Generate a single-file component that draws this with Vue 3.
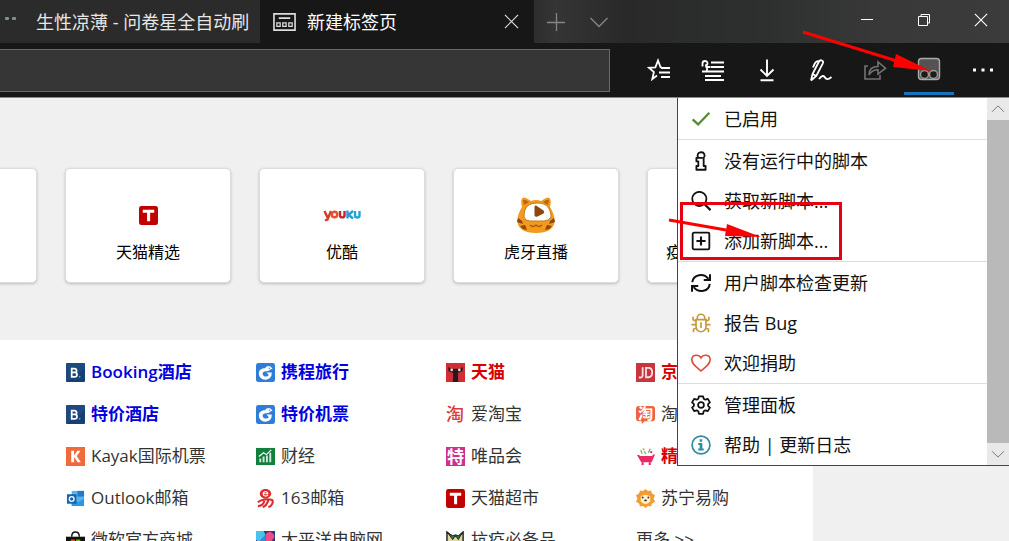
<script setup>
const tools = [
  { icon: 'favorites', label: '收藏夹' },
  { icon: 'reading', label: '阅读列表' },
  { icon: 'download', label: '下载' },
  { icon: 'pen', label: '添加笔记' },
  { icon: 'share', label: '共享' },
  { icon: 'monkey', label: '脚本管理器', active: true },
  { icon: 'dots', label: '更多' },
]
const cards = [
  { name: '', icon: '' },
  { name: '天猫精选', icon: 'tmall-t', kind: 'small' },
  { name: '优酷', icon: 'youku', kind: 'wide' },
  { name: '虎牙直播', icon: 'huya', kind: 'large' },
  { name: '疫情实时动态播报', icon: '' },
]
const links = [
  { name: 'Booking酒店', icon: 'booking', tone: 'blue' },
  { name: '携程旅行', icon: 'ctrip', tone: 'blue' },
  { name: '天猫', icon: 'tmall', tone: 'red' },
  { name: '京东', icon: 'jd', tone: 'red' },
  { name: '特价酒店', icon: 'booking', tone: 'blue' },
  { name: '特价机票', icon: 'ctrip', tone: 'blue' },
  { name: '爱淘宝', icon: 'aitaobao' },
  { name: '淘宝', icon: 'taobao' },
  { name: 'Kayak国际机票', icon: 'kayak' },
  { name: '财经', icon: 'finance' },
  { name: '唯品会', icon: 'vip' },
  { name: '精选', icon: 'cart', tone: 'red' },
  { name: 'Outlook邮箱', icon: 'outlook' },
  { name: '163邮箱', icon: 'netease' },
  { name: '天猫超市', icon: 'tmall-t' },
  { name: '苏宁易购', icon: 'suning' },
  { name: '微软官方商城', icon: 'store' },
  { name: '太平洋电脑网', icon: 'pconline' },
  { name: '抗疫必备品', icon: 'supplies' },
  { name: '更多 >>', icon: '' },
]
const groups = [
  [{ icon: 'check', label: '已启用', color: 'green' }],
  [
    { icon: 'info-i', label: '没有运行中的脚本' },
    { icon: 'search', label: '获取新脚本...' },
    { icon: 'add', label: '添加新脚本...' },
  ],
  [
    { icon: 'refresh', label: '用户脚本检查更新' },
    { icon: 'bug', label: '报告 Bug', color: 'gold' },
    { icon: 'heart', label: '欢迎捐助', color: 'coral' },
  ],
  [
    { icon: 'gear', label: '管理面板' },
    { icon: 'info', label: '帮助 | 更新日志', color: 'teal' },
  ],
]
</script>

<template>
  <div class="browser">
    <svg class="sprite" aria-hidden="true">
      <defs>
        <symbol id="favorites" viewBox="0 0 24 24">
          <path d="M15 9.500 L13.500 9.300 L11 2.500 L8.400 9.300 L2 9.800 L6.900 14 L5.300 21 L10 17.600 M14 10h9M12 14.500h11M14 19h9" fill="none" stroke="currentColor" stroke-width="1.8" />
        </symbol>
        <symbol id="reading" viewBox="0 0 24 24">
          <path d="M10 4.500h13M10 9h13M1 13.500h22M4 18h16M4 22h19M6 13.500V9M1.500 8.500V5.500a2.300 2.300 0 0 1 5 0c0 1.500-1 2-2.500 2M4.500 9h5" fill="none" stroke="currentColor" stroke-width="1.8" />
        </symbol>
        <symbol id="download" viewBox="0 0 24 24">
          <path d="M12 1.500V18M5.500 11.500 12 18l6.500-6.500M5.500 22.200h13" fill="none" stroke="currentColor" stroke-width="1.9" />
        </symbol>
        <symbol id="pen" viewBox="0 0 24 24">
          <path d="M2 22.500 3.500 16 10 3.500c1.500-2.500 5-.8 3.800 1.800L7.300 18 2 22.500M10 3.500C7 2 5.500 6 4 9.500M3.500 16l3.800 2M10 21c3-4 5-3.500 6-1.500s3 2.500 6.500-.5" fill="none" stroke="currentColor" stroke-width="1.8" />
        </symbol>
        <symbol id="share" viewBox="0 0 24 24">
          <path d="M5 8H2v13h15v-4M6 17c0-6 3-8.500 9-8.500V4l7.500 6.200-7.500 6v-4.500c-4 0-7 1.500-9 5.300Z" fill="none" stroke="currentColor" stroke-width="1.6" />
        </symbol>
        <symbol id="monkey" viewBox="0 0 24 24">
          <rect x="1.500" y="1.500" width="21" height="21" rx="3" fill="#535353" stroke="#aaa" stroke-width="1.4" />
          <circle cx="7.500" cy="17.500" r="4" fill="#1b1b1b" stroke="#9b9b9b" stroke-width="1.4" />
          <circle cx="16.500" cy="17.500" r="4" fill="#1b1b1b" stroke="#9b9b9b" stroke-width="1.4" />
        </symbol>
        <symbol id="dots" viewBox="0 0 24 24">
          <path d="M2 10.500h3v3H2zM10.500 10.500h3v3h-3zM19 10.500h3v3h-3z" fill="currentColor" />
        </symbol>
        <symbol id="newtab" viewBox="0 0 24 20">
          <path d="M1 1.500h22v17H1zM6 6h12" fill="none" stroke="#ddd" stroke-width="1.700" />
          <path d="M4 11h3.500v3.500H4zM10.200 11h3.500v3.500h-3.500zM16.500 11H20v3.500h-3.500z" fill="none" stroke="#ddd" stroke-width="1.3" />
        </symbol>
        <symbol id="close" viewBox="0 0 16 16"><path d="m1 1 14 14M15 1 1 15" fill="none" stroke="currentColor" stroke-width="1.300" /></symbol>
        <symbol id="plus" viewBox="0 0 20 20"><path d="M1 10.500h18M10.500 1v18" fill="none" stroke="currentColor" stroke-width="1.300" /></symbol>
        <symbol id="down" viewBox="0 0 20 20"><path d="m1.500 6 8.500 8.500L18.500 6" fill="none" stroke="currentColor" stroke-width="1.400" /></symbol>
        <symbol id="minimize" viewBox="0 0 14 14"><path d="M1 6.500h12" stroke="currentColor" stroke-width="1" /></symbol>
        <symbol id="restore" viewBox="0 0 14 14"><path d="M1.500 3.500h9v9h-9zM4 3.500v-2h8.500V10h-2" fill="none" stroke="currentColor" stroke-width="1" /></symbol>
        <symbol id="check" viewBox="0 0 24 24"><path d="m2 12.500 6.500 6L22 4.500" fill="none" stroke="currentColor" stroke-width="2.700" /></symbol>
        <symbol id="info-i" viewBox="0 0 24 24">
          <path d="M12 1.500a4 4 0 0 0-3 6.800H6.500v4.200h2.300v5.500H6.500v4.500h11V18h-2.300V8.300A4 4 0 0 0 12 1.500ZM9 8.300h5" fill="none" stroke="currentColor" stroke-width="2.200" stroke-linejoin="round" />
        </symbol>
        <symbol id="search" viewBox="0 0 24 24"><circle cx="10" cy="9.500" r="8.500" fill="none" stroke="currentColor" stroke-width="2.100" /><path d="m16 15.500 7.500 7.500" stroke="currentColor" stroke-width="2.600" /></symbol>
        <symbol id="add" viewBox="0 0 24 24"><rect x="2" y="2" width="20" height="20" rx="1.500" fill="none" stroke="currentColor" stroke-width="2.200" /><path d="M12 6.500v11M6.500 12h11" stroke="currentColor" stroke-width="2.500" /></symbol>
        <symbol id="refresh" viewBox="0 0 24 24"><path d="M1.500 11C3 1.500 15-.5 21 7M22.800 1.500V8.500h-7.500M22.500 13c-1 9.500-13 11.500-19.500 4M1.200 22.500v-7h7.500" fill="none" stroke="currentColor" stroke-width="2.400" /></symbol>
        <symbol id="bug" viewBox="0 0 24 24"><path d="M6 8h12v8.500a6 6 0 0 1-12 0ZM7.500 8V6a4.500 4.500 0 0 1 9 0v2M12 11v7M6 10 2.500 8V4.500M18 10l3.500-2V4.500M6 14H.5M18 14h5.500M6.500 18 3 19.500V23M17.500 18l3.500 1.500V23" fill="none" stroke="currentColor" stroke-width="2" /></symbol>
        <symbol id="heart" viewBox="0 0 24 24"><path d="M12 21.500C6 16.500 1 13 1 8c0-6.500 8.500-7 11-2 2.500-5 11-4.500 11 2 0 5-5 8.500-11 13.500Z" fill="none" stroke="currentColor" stroke-width="1.900" /></symbol>
        <symbol id="gear" viewBox="0 0 24 24"><path d="M9.500 1.500h5l.7 3 2 1.100 3-1 2.500 4.300-2.200 2.100v2l2.200 2.100-2.500 4.300-3-1-2 1.100-.7 3h-5l-.7-3-2-1.100-3 1-2.500-4.300 2.200-2.100v-2L1.300 8.900l2.500-4.300 3 1 2-1.100Z" fill="none" stroke="currentColor" stroke-width="2.100" stroke-linejoin="round" /><circle cx="12" cy="12" r="3.500" fill="none" stroke="currentColor" stroke-width="2.100" /></symbol>
        <symbol id="info" viewBox="0 0 24 24"><circle cx="12" cy="12" r="10.700" fill="none" stroke="currentColor" stroke-width="2" /><path d="M10.400 5.200h3v3h-3zM8.700 9.700h4.900v6.600h1.700v2.200H8.700v-2.200h1.700v-4.400H8.700z" fill="currentColor" /></symbol>
        <symbol id="tmall-t" viewBox="0 0 20 20"><rect width="20" height="20" rx="2.500" fill="#c30000" /><path d="M4 4h12v3h-4.300v9H8.500V7H4z" fill="#fff" /></symbol>
        <symbol id="youku" viewBox="0 0 38 16">
          <g fill="none" stroke-width="2.400"><path d="m1.500 4 3 6.500M8 4l-3.500 8.500-2.500 1" stroke="#d83a2a" /><circle cx="11.500" cy="7.500" r="2.700" stroke="#e8502f" /><path d="M17 4v4.500c0 2.500 4.500 2.500 4.500 0V4" stroke="#c8202c" /><path d="M24.500 3.500v8M30 4l-4.500 3.700L30 11.500" stroke="#279bd2" /><path d="M32 4v4.500c0 2.700 4.500 2.700 4.500 0V4" stroke="#20a8dd" /></g>
        </symbol>
        <symbol id="huya" viewBox="0 0 40 40">
          <path d="M6 12C4 5 6 1 10 3l5 3q5-2 10 0l5-3c4-2 6 2 4 9 8 13 7 26-14 26S-2 25 6 12Z" fill="#f29a1d" />
          <path d="M7 5c2-1 4 1 6 2L8 10ZM33 5c-2-1-4 1-6 2l5 3Z" fill="#b8670b" />
          <path d="M8 22C8 11 13 8 22 8s13 6 13 14q-2 4-7 4H14q-5 0-6-4Z" fill="#fff" stroke="#c67a16" />
          <path d="M18.500 11.500q1-2 3 0l6 4q1.500 1.500 0 3l-6 3q-2 1-3-1Z" fill="#8c470d" />
          <path d="m2 23 4 3 1 3-6-2M38 23l-4 3-1 3 6-2M4 31l5-1 2 5-4-1ZM36 31l-5-1-2 5 4-1Z" fill="#8c470d" />
          <path d="M14 30q3 3 6 0 3 3 6 0" fill="none" stroke="#a55b0a" stroke-width="1.300" />
        </symbol>
        <symbol id="booking" viewBox="0 0 20 20"><rect width="20" height="20" rx="1" fill="#173f73" /><path d="M0 0h20v6L0 20z" fill="#285a8f" opacity=".4" /><path d="M6 6h2.800c3 0 3 3.700.7 3.900 3 .4 2.800 4.600-.4 4.600H6Zm0 3.900h3.500" fill="none" stroke="#fff" stroke-width="1.800" /><circle cx="14.300" cy="14.500" r="1" fill="#3ea6df" /></symbol>
        <symbol id="ctrip" viewBox="0 0 20 20">
          <rect width="20" height="20" rx="2.500" fill="#2f7dd9" />
          <path d="M9.500 5.500C11 3.500 13.500 2.500 15.500 4l2 2-2.500.8c-1 2-3.500 1.700-6 2.200-2 .5-2.500 2.500-1.500 4 1.500 2 4.500 1.500 6-.5l-2.500-2.500h5.500c.5 4.500-2.500 7.500-6.500 7.500-4.500 0-7-3-7-6.500C3 8 5 5.500 9.500 5.500Z" fill="#fff" />
          <circle cx="14" cy="5.500" r=".7" fill="#2f7dd9" />
        </symbol>
        <symbol id="kayak" viewBox="0 0 20 20"><rect width="20" height="20" fill="#f06a3c" /><path d="M5.500 4h3v5L12 4h3.300l-4 5.600L15.600 16h-3.400l-3.700-5.500V16h-3Z" fill="#fff" /></symbol>
        <symbol id="finance" viewBox="0 0 20 20"><rect y="1" width="20" height="18" fill="#12803c" /><path d="M3.500 16v-4h2v4m1.500 0v-6h2v6m1.500 0V9h2v7m1.500 0V6h2v10" fill="#cfe8d7" /><path d="m3 10 5-4 3 2 5-5" fill="none" stroke="#fff" stroke-width="1.200" /></symbol>
        <symbol id="outlook" viewBox="0 0 20 20"><path d="M6 2h13v16H6z" fill="#58b4ea" /><path d="M12 2h7v6h-7z" fill="#267bc9" /><path d="M6 10l7 4 6-4v8H6z" fill="#2f97dc" /><path d="M1 5.500h10v10H1z" fill="#1264b5" /><circle cx="6" cy="10.500" r="2.500" fill="none" stroke="#fff" stroke-width="1.400" /></symbol>
        <symbol id="netease" viewBox="0 0 20 20"><path d="M4 5C4 2 7 0 10 0s6 2 6 5c0 2.500-3 5-6 5S4 8 4 5Z" fill="#df2b2c" /><path d="M7.500 5h5c0-3-5-3-5 0s4 3 5 1.200" fill="none" stroke="#fff" stroke-width="1.200" /><path d="M2 14c3-3 10-4 15-2.500 1.500 2 0 6.500-4 7.500M2 18c4 0 6-3 7-5.500M7 19c4-1 5-4 6-7" fill="none" stroke="#df2b2c" stroke-width="2.200" /></symbol>
        <symbol id="tmall" viewBox="0 0 20 20"><rect width="20" height="20" fill="#d12d35" /><path d="M2.500 4 5 6h10l2.500-2v4.500l-5 2 .3 9.500H7.200l.3-9.500-5-2Z" fill="#26191b" /><circle cx="6" cy="7.300" r="1.400" fill="#f4d8cf" /><circle cx="14" cy="7.300" r="1.400" fill="#f4d8cf" /></symbol>
        <symbol id="jd" viewBox="0 0 20 20"><rect width="20" height="20" fill="#c7353d" /><path d="M7 4.500v8.500q0 3-4 2M10.500 5.200h2.500q4 0 4 4.800t-4 5h-2.500Z" fill="none" stroke="#f6e1e1" stroke-width="1.900" /></symbol>
        <symbol id="aitaobao" viewBox="0 0 20 20"><text x="0" y="17" font-size="19" fill="#d63d38" font-weight="500">淘</text></symbol>
        <symbol id="taobao" viewBox="0 0 20 20"><path d="M3 1h14q3 0 3 3v10q0 3-3 3H9l-3 3v-3H3q-3 0-3-3V4q0-3 3-3Z" fill="#eb6545" /><text x="2" y="15" font-size="16" fill="#fff" font-weight="700">淘</text></symbol>
        <symbol id="vip" viewBox="0 0 20 20"><rect width="20" height="20" fill="#cf2f93" /><text x="1" y="16.500" font-size="18" fill="#fff" font-weight="700">特</text></symbol>
        <symbol id="cart" viewBox="0 0 20 20"><path d="M1 8.500h2.500l.5 1h13l.8-1.500H20l-3.500 8h-11Z" fill="#ed2965" /><path d="M7 16v3M14.500 16v3" stroke="#ed2965" stroke-width="2.200" /><path d="m5 3.500 1.500 3.500M9 4.500l1 3M13 6l2-4" stroke="#65ad65" stroke-width="1.300" /><circle cx="8" cy="2.500" r="1.200" fill="#f5a338" /><circle cx="16" cy="5.500" r="1.200" fill="#ed2965" /></symbol>
        <symbol id="suning" viewBox="0 0 20 20"><path d="m10 0 2.500 2 3.300-.5 1 3.200L20 6.500 18.500 10l1.500 3.500-3.200 1.800-1 3.200-3.300-.5L10 20l-2.500-2-3.300.5-1-3.200L0 13.500 1.500 10 0 6.500l3.200-1.800 1-3.200 3.300.5Z" fill="#f29d32" /><path d="M5 8q5-4 10 0v5q-5 6-10 0Z" fill="#fff0d4" /><circle cx="7" cy="9" r="1" fill="#50311d" /><circle cx="13" cy="9" r="1" fill="#50311d" /><ellipse cx="10" cy="12" rx="1.500" ry="1" fill="#50311d" /></symbol>
        <symbol id="store" viewBox="0 0 20 20"><path d="M6 6q0-5 4-5t4 5" fill="none" stroke="#111" stroke-width="1.500" /><path d="M0 6h20v14H0z" fill="#111" /><path d="M5 9h4.500v4H5z" fill="#f05122" /><path d="M10.500 9H15v4h-4.500z" fill="#7dbb00" /><path d="M5 14h4.500v4H5z" fill="#00a1f1" /><path d="M10.500 14H15v4h-4.500z" fill="#fb0" /></symbol>
        <symbol id="pconline" viewBox="0 0 20 20"><rect width="20" height="20" fill="#303681" /><path d="M0 0h8l2 4-7 8-3-3Z" fill="#49c2ed" /><path d="M10 4q3-5 7-2 5 3-1 9l-6 7Z" fill="#ee4d88" /><path d="m10 4-7 8 7 7Z" fill="#3290dc" /></symbol>
        <symbol id="supplies" viewBox="0 0 20 20"><path d="m1 1 6 5 3-1 3 1 5-5v12q-8 12-17 0Z" fill="#ead2a5" stroke="#1c231e" stroke-width="1.500" /><path d="m2 2 5 7 3-4 3 4 4-7-4 3-3-1-3 1Z" fill="#25813e" stroke="#1c231e" /></symbol>
      </defs>
    </svg>

    <header class="titlebar">
      <button class="tab tab-idle" type="button">
        <span class="site-eyes"><i></i><i></i></span>
        <span class="tab-title">生性凉薄 - 问卷星全自动刷流</span>
      </button>
      <div class="tab tab-current">
        <svg class="tab-icon"><use href="#newtab" /></svg>
        <span class="tab-title">新建标签页</span>
        <button class="tab-close" type="button" aria-label="关闭标签页"><svg><use href="#close" /></svg></button>
      </div>
      <button class="tab-action" type="button" aria-label="新建"><svg><use href="#plus" /></svg></button>
      <button class="tab-action" type="button" aria-label="标签页列表"><svg><use href="#down" /></svg></button>
      <div class="window-controls">
        <button type="button" aria-label="最小化"><svg><use href="#minimize" /></svg></button>
        <button type="button" aria-label="还原"><svg><use href="#restore" /></svg></button>
        <button type="button" aria-label="关闭"><svg><use href="#close" /></svg></button>
      </div>
    </header>

    <nav class="toolbar">
      <input class="address" type="text" aria-label="地址" />
      <button v-for="t in tools" :key="t.icon" class="tool" :class="[t.icon, { active: t.active }]" type="button" :aria-label="t.label">
        <svg><use :href="'#' + t.icon" /></svg>
      </button>
    </nav>

    <main class="page">
      <section class="cards">
        <a v-for="(c, i) in cards" :key="i" class="card" href="#" :aria-label="c.name || '网站'">
          <span class="card-icon"><svg v-if="c.icon" :class="c.kind"><use :href="'#' + c.icon" /></svg></span>
          <span class="card-name">{{ c.name }}</span>
        </a>
      </section>
      <section class="links">
        <a v-for="(l, i) in links" :key="i" class="link" :class="l.tone" href="#">
          <svg v-if="l.icon"><use :href="'#' + l.icon" /></svg>
          <span>{{ l.name }}</span>
        </a>
      </section>
    </main>

    <aside class="popup">
      <div class="menu">
        <div v-for="(g, i) in groups" :key="i" class="group">
          <button v-for="m in g" :key="m.label" class="item" type="button">
            <svg :class="m.color"><use :href="'#' + m.icon" /></svg>
            <span>{{ m.label }}</span>
          </button>
        </div>
      </div>
      <div class="scrollbar">
        <button type="button" aria-label="向上滚动"><svg class="flip"><use href="#down" /></svg></button>
        <div class="thumb"></div>
        <button type="button" aria-label="向下滚动"><svg><use href="#down" /></svg></button>
      </div>
      <div class="marker"></div>
      <svg class="arrow arrow-item" viewBox="0 0 100 24"><path d="m3 3 57 10" stroke="#f00" stroke-width="3" /><path d="m61 7-2 12 36 1Z" fill="#f00" /></svg>
    </aside>
    <svg class="arrow arrow-tool" viewBox="0 0 140 50"><path d="m4 6 94 29" stroke="#f00" stroke-width="3" /><path d="m97 28-3 13 38 4Z" fill="#f00" /></svg>
  </div>
</template>

<style>
body { margin: 0; }
</style>

<style scoped>
.browser {
  position: relative;
  display: flex;
  flex-direction: column;
  height: 100vh;
  overflow: hidden;
  background: #f0f0f0;
  font-family: "Open Sans", "Noto Sans CJK SC", sans-serif;
  color: #000;
}
.browser * { box-sizing: border-box; }
.sprite { position: absolute; width: 0; height: 0; }
button { border: 0; padding: 0; margin: 0; background: none; color: inherit; font: inherit; display: flex; align-items: center; justify-content: center; }
a { color: inherit; text-decoration: none; }
svg { display: block; flex: none; }

.titlebar {
  display: flex;
  flex: none;
  height: 43px;
  background: linear-gradient(90deg, #2a2a2a 0, #2a2a2a 52%, #353535 55%, #292929 62%, #2e3030 76%, #393939 88%, #3b3b3b 100%);
}
.tab { display: flex; align-items: center; flex: none; color: #fff; font-size: 18px; line-height: 42px; }
.tab-idle { width: 260px; padding-right: 10px; justify-content: flex-start; background: #2b2b2b; color: #e6e6e6; }
.tab-idle .tab-title { flex: 1; overflow: hidden; white-space: nowrap; text-align: left; }
.site-eyes { display: flex; gap: 3px; width: 36px; height: 10px; padding-left: 5px; }
.site-eyes i { width: 4px; height: 3px; border-radius: 1px; background: #7d9583; }
.tab-current { width: 274px; padding-left: 13px; background: #171717; }
.tab-icon { width: 23px; height: 20px; margin-right: 11px; }
.tab-current .tab-title { flex: 1; }
.tab-close { width: 46px; height: 42px; color: #ddd; }
.tab-close svg { width: 15px; height: 15px; }
.tab-action { width: 43px; height: 43px; color: #858585; }
.tab-action svg { width: 20px; height: 20px; }
.window-controls { display: flex; margin-left: auto; color: #fff; }
.window-controls button { width: 57px; height: 40px; }
.window-controls svg { width: 14px; height: 14px; }

.toolbar { display: flex; flex: none; height: 55px; margin-right: -1px; background: #171717; border-bottom: 1px solid #8a8a8a; }
.address { flex: 1; min-width: 0; height: 43px; margin: 6px 22px 0 0; padding: 0 12px; border: 1px solid #686868; border-left: 0; border-radius: 0; background: #363636; color: #fff; font: inherit; outline: none; }
.tool { width: 54px; height: 54px; color: #fff; }
.tool svg { width: 24px; height: 24px; }
.tool.share { color: #737373; }
.tool.active { width: 50px; height: 52px; margin: 0 2px; padding-top: 3px; border-bottom: 3px solid #1673bd; }

.page { flex: none; }
.cards { display: grid; grid-template-columns: repeat(5, 166px); gap: 28px; margin-left: -129px; padding: 70px 0 57px; }
.card { display: flex; flex-direction: column; align-items: center; height: 115px; border: 1px solid #ddd; border-radius: 5px; background: #fff; box-shadow: 0 1px 3px #bbb; }
.card-icon { display: flex; align-items: center; justify-content: center; height: 50px; margin-top: 21px; }
.card-name { font-size: 16px; line-height: 24px; }
.small { width: 19px; height: 19px; }
.wide { width: 38px; height: 16px; }
.large { width: 40px; height: 40px; }

.links { display: grid; grid-template-columns: repeat(3, 190px) 1fr; grid-auto-rows: 42px; margin-right: 196px; padding: 11px 0 11px 66px; background: #fff; }
.link { display: flex; align-items: center; gap: 6px; font-size: 17px; line-height: 24px; color: #333; white-space: nowrap; }
.link svg { width: 19px; height: 19px; }
.link.blue { color: #0000e0; font-weight: 600; }
.link.red { color: #d60000; font-weight: 600; }

.popup { position: absolute; top: 98px; right: 0; display: flex; width: 332px; border-left: 1px solid #444; border-bottom: 1px solid #444; background: #fff; }
.menu { flex: 1; padding-top: 1px; }
.group + .group { border-top: 1px solid #ddd; padding-top: 1px; }
.item { width: 100%; height: 40px; padding-left: 13px; gap: 13px; justify-content: flex-start; font-size: 18px; line-height: 26px; white-space: nowrap; color: #111; }
.item svg { width: 20px; height: 20px; }
.green { color: #568a2c; }
.gold { color: #c49a3a; }
.coral { color: #df4a3c; }
.teal { color: #2f8aa3; }
.scrollbar { display: flex; flex-direction: column; width: 22px; background: #e9e9e9; color: #777; }
.scrollbar button { height: 22px; }
.scrollbar svg { width: 14px; height: 14px; }
.flip { transform: rotate(180deg); }
.thumb { flex: 1; background: #b9b9b9; }
.marker { position: absolute; left: 2px; top: 104px; width: 162px; height: 58px; border: 3px solid #e60012; }
.arrow { position: absolute; fill: none; pointer-events: none; }
.arrow-item { left: -12px; top: 119px; width: 100px; height: 24px; }
.arrow-tool { top: 26px; right: 70px; width: 140px; height: 50px; }
</style>
